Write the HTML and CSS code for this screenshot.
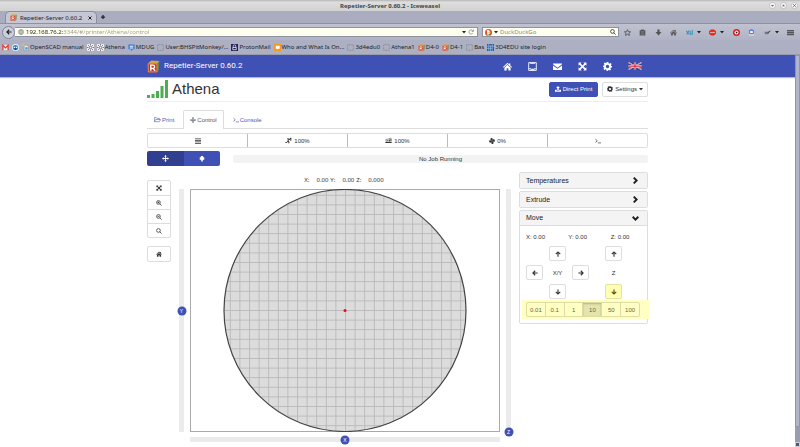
FILE: index.html
```html
<!DOCTYPE html>
<html lang="en">
<head>
<meta charset="utf-8">
<title>Repetier-Server 0.60.2</title>
<link rel="stylesheet" href="styles.css">
</head>
<body>
<svg class="sprite" aria-hidden="true">
  <defs>
    <symbol id="i-move" viewBox="0 0 16 16"><path d="M8 0l3 3.500H9V7h3.500V5L16 8l-3.500 3V9H9v3.500h2L8 16l-3-3.500h2V9H3.500v2L0 8l3.500-3v2H7V3.500H5z"/></symbol>
    <symbol id="i-home" viewBox="0 0 16 16"><path d="M8 1.500l2.500 2.300V2.500h2.500v3.600L16 9l-1 1-7-6.300L1 10 0 9z"/><path d="M8 5l5.500 5v5H9.500v-4h-3v4h-4v-5z"/></symbol>
    <symbol id="i-expand" viewBox="0 0 16 16"><path d="M1 1h5.500L4.700 2.800 8 6l3.300-3.200L9.500 1H15v5.500l-1.800-1.800L10 8l3.200 3.300L15 9.500V15H9.500l1.800-1.800L8 10l-3.300 3.200L6.500 15H1V9.500l1.800 1.800L6 8 2.800 4.700 1 6.500z"/></symbol>
    <symbol id="i-mail" viewBox="0 0 16 16"><path d="M0 2.500h16v1.700L8 10 0 4.200zM0 6l8 5.800L16 6v8H0z"/></symbol>
    <symbol id="i-gear" viewBox="0 0 16 16"><path fill-rule="evenodd" d="M6.500 0h3l.5 2.300 1.300.6 2-1.300 2 2.100-1.200 2 .5 1.300L16 7v2.500l-2.200.5-.6 1.300 1.200 2-2.100 2-2-1.200-1.300.5L8.500 16H6.500L6 13.700l-1.300-.6-2 1.200-2-2 1.200-2L1.400 9 0 8.700V6.500L2 6l.6-1.300-1.200-2 2-2 2.100 1.200L6.200 2zM8 5a3 3 0 100 6 3 3 0 000-6z"/></symbol>
    <symbol id="i-printer" viewBox="0 0 16 16"><path fill="none" stroke="currentColor" stroke-width="1.500" d="M1.200 1h13.600v14H1.200zM1.200 12h4v2h5.600v-2h4M4 1v1.500h8V1"/><path d="M6 12h4v2H6z"/></symbol>
    <symbol id="i-upload" viewBox="0 0 16 16"><path d="M8 0l5 5.500h-3V11H6V5.500H3zM0 10h4.500v2.500h7V10H16v5H0z"/></symbol>
    <symbol id="i-folder" viewBox="0 0 18 16"><path fill="none" stroke="currentColor" stroke-width="1.500" stroke-linejoin="round" d="M1 13V3h5l1.500 2H14v3M1 13.500L4.500 8H17l-3.500 5.500z"/></symbol>
    <symbol id="i-term" viewBox="0 0 16 16"><path fill="none" stroke="currentColor" stroke-width="1.800" d="M1 3l5 4.500L1 12M7.500 13H16"/></symbol>
    <symbol id="i-bars" viewBox="0 0 16 16"><path d="M0 1h16v2H0zM0 5h16v2H0zM0 9h16v2H0zM0 13h16v2H0z"/></symbol>
    <symbol id="i-run" viewBox="0 0 20 16"><circle cx="16" cy="2.500" r="2.500"/><path fill="none" stroke="currentColor" stroke-width="2.800" d="M6 3.500h6l2.500 3.500 4-.5M11.500 4L8 10l4 2-2 4M8 10l-2.500 3.500H1"/></symbol>
    <symbol id="i-flow" viewBox="0 0 20 16"><path d="M1 12h18v3H1zM2 8h3v3H2zM6.500 7h3v4h-3zM11 5h3v6h-3zM15.500 2h3v9h-3z"/><path fill="none" stroke="currentColor" stroke-width="1.500" d="M1 6l8-2 7-3"/></symbol>
    <symbol id="i-fan" viewBox="0 0 16 16"><g id="blade"><path d="M8 8C3 7 2 1 6.500.3 11 0 11 4 8 8z"/></g><use href="#blade" transform="rotate(90 8 8)"/><use href="#blade" transform="rotate(180 8 8)"/><use href="#blade" transform="rotate(270 8 8)"/></symbol>
    <symbol id="i-extr" viewBox="0 0 16 16"><path d="M5 0h6v3h3v7h-3l-1.500 3H9v3H7v-3h-.5L5 10H2V3h3z"/></symbol>
    <symbol id="i-zin" viewBox="0 0 16 16"><path fill="none" stroke="currentColor" stroke-width="2" d="M6.500 1.500a5 5 0 100 10 5 5 0 000-10zM10 10l5 5M6.500 4v5M4 6.500h5"/></symbol>
    <symbol id="i-zout" viewBox="0 0 16 16"><path fill="none" stroke="currentColor" stroke-width="2" d="M6.500 1.500a5 5 0 100 10 5 5 0 000-10zM10 10l5 5M4 6.500h5"/></symbol>
    <symbol id="i-zoom" viewBox="0 0 16 16"><path fill="none" stroke="currentColor" stroke-width="2" d="M6.500 1.500a5 5 0 100 10 5 5 0 000-10zM10 10l5 5"/></symbol>
    <symbol id="i-up" viewBox="0 0 16 16"><path fill="none" stroke="currentColor" stroke-width="3" d="M8 15V3M2 8.500l6-6 6 6"/></symbol>
    <symbol id="i-down" viewBox="0 0 16 16"><path fill="none" stroke="currentColor" stroke-width="3" d="M8 1v12M2 7.500l6 6 6-6"/></symbol>
    <symbol id="i-left" viewBox="0 0 16 16"><path fill="none" stroke="currentColor" stroke-width="3" d="M15 8H3M8.500 2l-6 6 6 6"/></symbol>
    <symbol id="i-right" viewBox="0 0 16 16"><path fill="none" stroke="currentColor" stroke-width="3" d="M1 8h12M7.500 2l6 6-6 6"/></symbol>
    <symbol id="i-chev" viewBox="0 0 16 16"><path fill="none" stroke="currentColor" stroke-width="4.500" d="M4 1.500L10.500 8 4 14.500"/></symbol>
    <symbol id="i-chevd" viewBox="0 0 16 16"><path fill="none" stroke="currentColor" stroke-width="4.500" d="M1.500 4L8 10.500 14.500 4"/></symbol>
    <symbol id="i-caret" viewBox="0 0 8 8"><path d="M0 2h8L4 7z"/></symbol>
    <symbol id="i-cross" viewBox="0 0 8 8"><path fill="none" stroke="currentColor" stroke-width="2" d="M1 1l6 6M7 1L1 7"/></symbol>
    <symbol id="i-plus" viewBox="0 0 8 8"><path fill="none" stroke="currentColor" stroke-width="2.500" d="M4 0v8M0 4h8"/></symbol>
    <symbol id="i-wmin" viewBox="0 0 16 16"><circle cx="8" cy="8" r="7" fill="#f4f4f4" stroke="#999"/><path d="M4.500 7h7L8 11z"/></symbol>
    <symbol id="i-wmax" viewBox="0 0 16 16"><circle cx="8" cy="8" r="7" fill="#f4f4f4" stroke="#999"/><path d="M4.500 9.500h7L8 5.500z"/></symbol>
    <symbol id="i-wclose" viewBox="0 0 16 16"><circle cx="8" cy="8" r="7" fill="#f4f4f4" stroke="#999"/><path fill="none" stroke="currentColor" stroke-width="2" d="M5 5l6 6M11 5l-6 6"/></symbol>
    <symbol id="i-globe" viewBox="0 0 16 16"><g fill="none" stroke="currentColor" stroke-width="1.500"><circle cx="8" cy="8" r="7"/><ellipse cx="8" cy="8" rx="3" ry="7"/><path d="M1 8h14M2.500 4.500h11M2.500 11.500h11"/></g></symbol>
    <symbol id="i-reload" viewBox="0 0 16 16"><path fill="none" stroke="#7288a8" stroke-width="2" d="M13 10.500A5.500 5.500 0 118 2.500h3"/><path fill="#7288a8" d="M9 7h6V0z"/></symbol>
    <symbol id="i-duck" viewBox="0 0 16 16"><circle cx="8" cy="8" r="8" fill="#dd5533"/><path fill="#fff" d="M4 3c4-2 7 0 7 4v8H6z"/><path fill="#f4b63a" d="M8 7h6l-3 2H8z"/><path fill="#3b9a45" d="M8 11h4v3H8z"/></symbol>
    <symbol id="i-star" viewBox="0 0 16 16"><path fill="none" stroke="currentColor" stroke-width="2" d="M8 1.500l2 4.500 5 .5-3.800 3.300 1.200 4.900L8 12l-4.400 2.700 1.200-4.900L1 6.500 6 6z"/></symbol>
    <symbol id="i-clip" viewBox="0 0 16 16"><path d="M5 1h6v2h3.500v12h-13V3H5z"/><path fill="none" stroke="#9a9ca8" d="M4 6h8M4 9h8M4 12h8"/></symbol>
    <symbol id="i-dl" viewBox="0 0 16 16"><path d="M5.500 1h5v6H15l-7 8-7-8h4.500z"/></symbol>
    <symbol id="i-ext" viewBox="0 0 20 16"><path fill="none" stroke="#2f95bd" stroke-width="3" d="M1 3l7 10M9 2L2 14M12 4v9h7M18 1v12"/></symbol>
    <symbol id="i-abp" viewBox="0 0 16 16"><path fill="#d92a1c" d="M5 1h6l5 4v6l-5 4H5l-5-4V5z"/><path fill="#e9a49c" d="M2 6.500h12v3H2z"/></symbol>
    <symbol id="i-target" viewBox="0 0 16 16"><circle cx="8" cy="8" r="8" fill="#e21b1b"/><circle cx="8" cy="8" r="4.500" fill="#fff"/><path fill="#222" d="M6 5l5 3-4 3z"/></symbol>
    <symbol id="i-ghost" viewBox="0 0 16 16"><circle cx="8" cy="6.500" r="6" fill="#5878d8"/><path fill="#eef" d="M4 6c2-3 6-3 8 0l-1 3H5z"/><path fill="#ddd" d="M2 12h12v3H2z"/></symbol>
    <symbol id="i-pen" viewBox="0 0 20 16"><path fill="#777" d="M1 6h12v7H3z"/><path fill="#444" d="M10 7l8-5 1 2-7 6z"/></symbol>
    <symbol id="i-menu" viewBox="0 0 16 16"><path d="M0 2h16v3H0zM0 6.500h16v3H0zM0 11h16v3H0z"/></symbol>
    <symbol id="i-gmail" viewBox="0 0 16 16"><path fill="#f3e9ec" d="M1 2h14v12H1z"/><path fill="none" stroke="#d8402f" stroke-width="3" d="M2 14V3l6 6 6-6v11"/></symbol>
    <symbol id="i-bird" viewBox="0 0 16 16"><circle cx="8" cy="8" r="8" fill="#eef4ff"/><circle cx="8" cy="8" r="6" fill="#2b84d6"/><path fill="#fff" d="M4 6h3v3H4zM9 6h3v3H9z"/><path fill="#223" d="M6 10h4v3H6z"/></symbol>
    <symbol id="i-scad" viewBox="0 0 16 16"><path fill="#e8c44c" d="M1 1h9v4H1z"/><path fill="#e9eef5" stroke="#6c7b90" d="M5 3h9v12H5z"/><circle cx="10" cy="10" r="3" fill="#52a0d0"/></symbol>
    <symbol id="i-sun" viewBox="0 0 16 16"><path fill="#f1f1f1" d="M0 0h16v16H0z"/><circle cx="8" cy="8" r="3" fill="none" stroke="#444" stroke-width="1.500"/><path stroke="#444" stroke-width="1.500" d="M8 0v3M8 13v3M0 8h3M13 8h3M2 2l2.500 2.500M11.500 11.500L14 14M14 2l-2.500 2.500M2 14l2.500-2.500"/></symbol>
    <symbol id="i-chat" viewBox="0 0 16 16"><path fill="#2d7be5" d="M1 1h14v11h-4l-3 4-2-4H1z"/><path fill="#fff" d="M4 4h8v2H4zM4 8h8v2H4z"/></symbol>
    <symbol id="i-blank" viewBox="0 0 16 16"><path fill="none" stroke="#74767f" stroke-width="1.500" stroke-dasharray="2 1.500" d="M1.500 1.500h13v13h-13z"/></symbol>
    <symbol id="i-proton" viewBox="0 0 16 16"><path fill="#25235a" d="M0 0h16v16H0z"/><path fill="none" stroke="#fff" stroke-width="1.600" d="M5 8V5a3 3 0 016 0v3M4 8h8v5H4z"/></symbol>
    <symbol id="i-who" viewBox="0 0 16 16"><path fill="#f0982a" d="M0 0h16v16H0z"/><path fill="#fff" d="M4 4h9v7H9l-2 2v-2H4z"/></symbol>
    <symbol id="i-grid" viewBox="0 0 16 16"><path fill="#2c5c9e" d="M0 0h16v16H0z"/><path stroke="#9cc0e8" stroke-width="1.500" d="M4 0v16M8 3v13M12 0v16M0 5h16M0 10h12"/></symbol>
    <symbol id="i-rep" viewBox="0 0 24 24"><path fill="#d9a441" d="M2 6l6-5 15 1-3 5z"/><path fill="#5f8a3c" d="M19 7l4-5-1 16-4 5z"/><path fill="#c9341f" d="M1 6h18v17H2z"/><path fill="none" stroke="#f3d9a0" d="M2 7h16.500v15H2.500z"/><path fill="none" stroke="#fff" stroke-width="2.600" d="M7 20V9.500h4a3 3 0 010 6H7M11 15.500l4 4.500"/></symbol>
    <symbol id="i-flag" viewBox="0 0 26 16"><path fill="#27418f" d="M0 1q6-1 13 0t13 0v14q-6 1-13 0T0 15z"/><path stroke="#fff" stroke-width="2.500" d="M0 1l26 14M26 1L0 15"/><path stroke="#d3384a" stroke-width="1.200" d="M0 1l26 14M26 1L0 15"/><path stroke="#fff" stroke-width="4.500" d="M13 1v14M0 8h26"/><path stroke="#d3283a" stroke-width="2.500" d="M13 1v14M0 8h26"/></symbol>
    <pattern id="cells" width="9.600" height="9.600" x="155" y="121" patternUnits="userSpaceOnUse"><path d="M0 .5H9.600M.5 0V9.600" fill="none" stroke="#8a8a8a" stroke-opacity=".4"/></pattern>
  </defs>
</svg>

<header class="chrome">
  <div class="titlebar">
    <strong>Repetier-Server 0.60.2 - Iceweasel</strong>
    <div class="window-buttons">
      <button aria-label="Minimize"><svg class="i7"><use href="#i-wmin"/></svg></button>
      <button aria-label="Maximize"><svg class="i7"><use href="#i-wmax"/></svg></button>
      <button aria-label="Close"><svg class="i7"><use href="#i-wclose"/></svg></button>
    </div>
  </div>
  <div class="tabstrip">
    <div class="browser-tab">
      <svg class="i7"><use href="#i-rep"/></svg><span>Repetier-Server 0.60.2</span>
      <button aria-label="Close tab"><svg class="i4"><use href="#i-cross"/></svg></button>
    </div>
    <button class="new-tab" aria-label="New tab"><svg class="i4"><use href="#i-plus"/></svg></button>
  </div>
  <div class="navbar">
    <button class="back" aria-label="Back"><svg class="i6"><use href="#i-left"/></svg></button>
    <div class="field address">
      <svg class="i6 muted"><use href="#i-globe"/></svg>
      <input aria-label="Address" value="192.168.76.2:3344/#/printer/Athena/control">
      <svg class="i4"><use href="#i-caret"/></svg>
      <button aria-label="Reload"><svg class="i6"><use href="#i-reload"/></svg></button>
    </div>
    <div class="field search">
      <svg class="i7"><use href="#i-duck"/></svg><svg class="i4"><use href="#i-caret"/></svg>
      <input aria-label="Search" placeholder="DuckDuckGo">
      <button aria-label="Go"><svg class="i6"><use href="#i-zoom"/></svg></button>
    </div>
    <div class="tools">
      <button aria-label="Bookmark"><svg class="i7"><use href="#i-star"/></svg></button>
      <button aria-label="Library"><svg class="i7"><use href="#i-clip"/></svg></button>
      <button aria-label="Downloads"><svg class="i7"><use href="#i-dl"/></svg></button>
      <button aria-label="Home"><svg class="i7"><use href="#i-home"/></svg></button>
      <button aria-label="Extension"><svg class="i7"><use href="#i-ext"/></svg><svg class="i4 dark"><use href="#i-caret"/></svg></button>
      <button aria-label="Ad blocker"><svg class="i7"><use href="#i-abp"/></svg><svg class="i4 dark"><use href="#i-caret"/></svg></button>
      <button aria-label="Privacy"><svg class="i7"><use href="#i-target"/></svg></button>
      <button aria-label="Trackers"><svg class="i7"><use href="#i-ghost"/></svg></button>
      <button aria-label="Edit"><svg class="i7"><use href="#i-pen"/></svg><svg class="i4 dark"><use href="#i-caret"/></svg></button>
      <button aria-label="Menu"><svg class="i7"><use href="#i-menu"/></svg></button>
    </div>
  </div>
  <nav class="bookmarks">
    <a href="#"><svg class="i7"><use href="#i-gmail"/></svg></a>
    <a href="#"><svg class="i7"><use href="#i-bird"/></svg></a>
    <a href="#"><svg class="i7"><use href="#i-scad"/></svg>OpenSCAD manual</a>
    <a href="#"><svg class="i7"><use href="#i-sun"/></svg></a>
    <a href="#"><svg class="i7"><use href="#i-sun"/></svg>Athena</a>
    <a href="#"><svg class="i7"><use href="#i-chat"/></svg>MDUG</a>
    <a href="#"><svg class="i7"><use href="#i-blank"/></svg>User:BHSPitMonkey/...</a>
    <a href="#"><svg class="i7"><use href="#i-proton"/></svg>ProtonMail</a>
    <a href="#"><svg class="i7"><use href="#i-who"/></svg>Who and What Is On...</a>
    <a href="#"><svg class="i7"><use href="#i-blank"/></svg>3d4edu0</a>
    <a href="#"><svg class="i7"><use href="#i-blank"/></svg>Athena1</a>
    <a href="#"><svg class="i7"><use href="#i-rep"/></svg>D4-0</a>
    <a href="#"><svg class="i7"><use href="#i-rep"/></svg>D4-1</a>
    <a href="#"><svg class="i7"><use href="#i-blank"/></svg>Bas</a>
    <a href="#"><svg class="i7"><use href="#i-grid"/></svg>3D4EDU site login</a>
  </nav>
</header>

<div class="viewport">
  <div class="page">
    <header class="appbar">
      <div class="container appbar-row">
        <a class="brand" href="#"><svg class="i13"><use href="#i-rep"/></svg>Repetier-Server 0.60.2</a>
        <nav class="app-links">
          <a href="#" aria-label="Home"><svg class="i9"><use href="#i-home"/></svg></a>
          <a href="#" aria-label="Printers"><svg class="i9"><use href="#i-printer"/></svg></a>
          <a href="#" aria-label="Messages"><svg class="i9"><use href="#i-mail"/></svg></a>
          <a href="#" aria-label="Fullscreen"><svg class="i9"><use href="#i-expand"/></svg></a>
          <a href="#" aria-label="Settings"><svg class="i9"><use href="#i-gear"/></svg></a>
          <a href="#" aria-label="Language"><svg class="flag"><use href="#i-flag"/></svg></a>
        </nav>
      </div>
    </header>

    <main class="container">
      <div class="heading">
        <svg class="signal" viewBox="0 0 21 18"><path d="M0 15h3v3H0zM4.500 14h3v4h-3zM9 11h3v7H9zM13.500 6h3v12h-3zM18 0h3v18h-3z"/></svg>
        <h1>Athena</h1>
        <button class="btn primary"><svg class="i6"><use href="#i-upload"/></svg>Direct Print</button>
        <button class="btn"><svg class="i6"><use href="#i-gear"/></svg>Settings<svg class="i4"><use href="#i-caret"/></svg></button>
      </div>

      <nav class="tabs">
        <a href="#"><svg class="i7"><use href="#i-folder"/></svg>Print</a>
        <a href="#" class="active"><svg class="i6"><use href="#i-move"/></svg>Control</a>
        <a href="#"><svg class="i6"><use href="#i-term"/></svg>Console</a>
      </nav>

      <div class="status">
        <button aria-label="Overview"><svg class="i6"><use href="#i-bars"/></svg></button>
        <button><svg class="i7"><use href="#i-run"/></svg>100%</button>
        <button><svg class="i7"><use href="#i-flow"/></svg>100%</button>
        <button><svg class="i6"><use href="#i-fan"/></svg>0%</button>
        <button aria-label="Commands"><svg class="i6"><use href="#i-term"/></svg></button>
      </div>

      <div class="job">
        <div class="mode">
          <button class="on" aria-label="Move"><svg class="i7"><use href="#i-move"/></svg></button>
          <button aria-label="Extruder"><svg class="i6"><use href="#i-extr"/></svg></button>
        </div>
        <div class="progress">No Job Running</div>
      </div>

      <div class="workspace">
        <div class="view-tools">
          <div class="stack">
            <button aria-label="Fit"><svg class="i6"><use href="#i-expand"/></svg></button>
            <button aria-label="Zoom in"><svg class="i6"><use href="#i-zin"/></svg></button>
            <button aria-label="Zoom out"><svg class="i6"><use href="#i-zout"/></svg></button>
            <button aria-label="Zoom"><svg class="i6"><use href="#i-zoom"/></svg></button>
          </div>
          <div class="stack">
            <button aria-label="Home all"><svg class="i6"><use href="#i-home"/></svg></button>
          </div>
        </div>

        <div class="bed-area">
          <div class="readout"><span>X:</span><span class="num">0.00</span><span>Y:</span><span class="num">0.00</span><span>Z:</span><span class="num">0.000</span></div>
          <div class="axis vertical"><input id="ax-y" type="range" value="50"><label class="mid" for="ax-y">Y</label></div>
          <svg class="bed" viewBox="0 0 310 243">
            <rect x=".5" y=".5" width="309" height="242" fill="#fff" stroke="#aaa"/>
            <circle cx="155" cy="121.500" r="121" fill="#dcdcdc"/>
            <circle cx="155" cy="121.500" r="121" fill="url(#cells)" stroke="#444" stroke-width="1.200"/>
            <circle cx="155" cy="121.500" r="1.500" fill="#e01010"/>
          </svg>
          <div class="axis vertical"><input id="ax-z" type="range" value="0"><label class="low" for="ax-z">Z</label></div>
          <div class="axis horizontal"><input id="ax-x" type="range" value="50"><label class="mid" for="ax-x">X</label></div>
        </div>

        <aside class="panels">
          <section class="panel"><button class="panel-head">Temperatures<svg class="i7"><use href="#i-chev"/></svg></button></section>
          <section class="panel"><button class="panel-head">Extrude<svg class="i7"><use href="#i-chev"/></svg></button></section>
          <section class="panel">
            <button class="panel-head open">Move<svg class="i7"><use href="#i-chevd"/></svg></button>
            <div class="panel-body">
              <div class="position"><span>X: 0.00</span><span>Y: 0.00</span><span>Z: 0.00</span></div>
              <div class="jog">
                <div class="pad">
                  <button class="key n" aria-label="Y plus"><svg class="i6"><use href="#i-up"/></svg></button>
                  <button class="key w" aria-label="X minus"><svg class="i6"><use href="#i-left"/></svg></button>
                  <span class="c">X/Y</span>
                  <button class="key e" aria-label="X plus"><svg class="i6"><use href="#i-right"/></svg></button>
                  <button class="key s" aria-label="Y minus"><svg class="i6"><use href="#i-down"/></svg></button>
                </div>
                <div class="lift">
                  <button class="key" aria-label="Z plus"><svg class="i6"><use href="#i-up"/></svg></button>
                  <span>Z</span>
                  <button class="key marked" aria-label="Z minus"><svg class="i6"><use href="#i-down"/></svg></button>
                </div>
              </div>
              <div class="steps-band">
                <div class="steps">
                  <button>0.01</button><button>0.1</button><button>1</button><button class="on">10</button><button>50</button><button>100</button>
                </div>
              </div>
            </div>
          </section>
        </aside>
      </div>
    </main>
  </div>
  <div class="scrollbar" aria-hidden="true"><div class="thumb"></div><div class="track"></div><div class="end"></div></div>
</div>
</body>
</html>
```
FILE: styles.css
```css
* { box-sizing: border-box; }
body {
  margin: 0;
  height: 100vh;
  display: flex;
  flex-direction: column;
  overflow: hidden;
  background: #fff;
  color: #333;
  font: 6px/8px "Liberation Sans", Arial, sans-serif;
}
button, input { font: inherit; color: inherit; border: 0; padding: 0; margin: 0; background: none; }
button { display: flex; align-items: center; justify-content: center; }
a { color: inherit; text-decoration: none; }
svg { display: block; flex: none; fill: currentColor; color: inherit; }
.sprite { position: absolute; width: 0; height: 0; }
.i4 { width: 4px; height: 4px; }
.i6 { width: 6px; height: 6px; }
.i7 { width: 7px; height: 7px; }
.i9 { width: 9px; height: 9px; }
.i13 { width: 13px; height: 13px; }
.muted { color: #888; }
.dark { color: #222; }

/* Browser frame */
.chrome { flex: none; font-family: "Noto Sans", sans-serif; color: #222; background: #adb0c2; }
.titlebar {
  height: 11px;
  display: grid;
  grid-template-columns: 1fr auto 1fr;
  align-items: center;
  padding: 0 2px;
  background: linear-gradient(#b4b4b4, #dedede 2px, #d2d2d2);
  color: #444;
}
.titlebar strong { grid-column: 2; margin-right: 20px; }
.window-buttons { display: flex; gap: 4px; justify-self: end; color: #666; }
.tabstrip { height: 13px; display: flex; align-items: flex-end; padding-left: 5px; background: #aaadbf; border-bottom: 1px solid #8e91a3; }
.browser-tab {
  height: 12px;
  width: 92px;
  display: flex;
  align-items: center;
  gap: 3px;
  padding: 0 4px;
  border: 1px solid #8b8e9e;
  border-bottom: 0;
  border-radius: 5px 5px 0 0;
  background: #c5c7d4;
}
.browser-tab button { margin-left: auto; }
.new-tab { width: 12px; height: 12px; }
.navbar { height: 16px; display: flex; align-items: center; gap: 4px; padding: 0 6px 0 2px; background: linear-gradient(#c0c2d0, #b0b3c4); }
.back { width: 13px; height: 13px; border: 1px solid #83869a; border-radius: 50%; background: #ccd0dc; }
.field { height: 10px; display: flex; align-items: center; gap: 2px; padding: 0 3px; background: #fffff0; border: 1px solid #8e919f; }
.field input { flex: 1; min-width: 0; height: 8px; outline: 0; }
.address { flex: 1; margin-left: -4px; border-left: 0; }
.address input {
  background: linear-gradient(90deg, #222 37px, #999 37px);
  background-clip: text;
  -webkit-background-clip: text;
  color: transparent;
}
.search { width: 137px; padding: 0 2px; }
.search input::placeholder { color: #888; opacity: 1; }
.tools { width: 171px; display: flex; align-items: center; justify-content: space-between; padding-left: 1px; color: #555; }
.tools button { gap: 4px; }
.bookmarks { height: 15px; display: flex; align-items: center; gap: 3px; padding-left: 2px; border-bottom: 1px solid #999cab; white-space: nowrap; }
.bookmarks a { display: flex; align-items: center; gap: 1px; }

/* Viewport */
.viewport { flex: 1; min-height: 0; display: flex; }
.page { flex: 1; min-width: 0; overflow: hidden; }
.scrollbar { width: 5px; display: flex; flex-direction: column; background: #9a9db0; }
.scrollbar .thumb { flex: 1; background: #b2b5ca; border: 1px solid #9295a8; }
.scrollbar .track { height: 15px; background: #9a9db0; }
.scrollbar .end { height: 5px; background: #555869; border: 1px solid #c9ccd8; }
.container { max-width: 501px; margin: 0 auto; }

/* Application bar */
.appbar { background: #3f51b5; color: #fff; box-shadow: 0 1px 1px #bbb; }
.appbar-row { height: 22px; display: flex; align-items: center; justify-content: space-between; }
.brand { display: flex; align-items: center; gap: 4px; font: 8px/10px Roboto, sans-serif; }
.app-links { display: flex; align-items: center; gap: 16px; padding-right: 6px; }
.flag { width: 14px; height: 8px; }

/* Heading */
.heading { height: 25px; display: flex; align-items: center; gap: 4px; border-bottom: 1px solid #eee; }
.signal { width: 21px; height: 18px; fill: #4cae50; }
h1 { flex: 1; margin: 0; font: 15px/18px "Liberation Sans", Arial, sans-serif; }
.btn { height: 15px; gap: 2px; padding: 0 4px; border: 1px solid #ddd; border-radius: 2px; background: #fff; }
.btn.primary { padding: 0 5px; background: #3f51b5; border-color: #3f51b5; color: #fff; }

/* Tabs */
.tabs { display: flex; gap: 2px; margin-top: 8px; border-bottom: 1px solid #ddd; color: #4a5bb9; }
.tabs a { display: flex; align-items: center; gap: 1px; height: 18px; padding: 0 6px; border: 1px solid transparent; border-bottom: 0; border-radius: 2px 2px 0 0; }
.tabs .active { color: #555; background: #fff; border-color: #ddd; margin-bottom: -1px; height: 19px; }

.status { display: flex; height: 15px; margin-top: 4px; border: 1px solid #ddd; border-radius: 2px; }
.status button { flex: 1; gap: 2px; }
.status button + button { border-left: 1px solid #bbb; }

.job { display: flex; align-items: center; gap: 13px; margin-top: 3px; }
.mode { width: 73px; height: 15px; display: flex; border-radius: 2px; overflow: hidden; color: #fff; }
.mode button { flex: 1; background: #3f51b5; }
.mode .on { background: #303f8f; }
.progress { flex: 1; height: 8px; text-align: center; background: #f3f3f3; border-radius: 2px; }

/* Workspace */
.workspace { display: flex; align-items: flex-start; gap: 6px; margin-top: 6px; }
.view-tools { width: 24px; display: flex; flex-direction: column; gap: 8px; margin-top: 8px; }
.stack { border: 1px solid #ddd; border-radius: 2px; }
.stack button { width: 100%; height: 14px; }
.stack button + button { border-top: 1px solid #ddd; }
.bed-area { flex: 1; min-width: 0; display: grid; grid-template-columns: 9px 1fr 9px; column-gap: 4px; }
.readout {
  grid-column: 2;
  display: flex;
  justify-content: center;
  height: 17px;
  padding-top: 4px;
  font-family: "Noto Sans", sans-serif;
}
.num { margin: 0 2px 0 7px; }
.vertical { grid-row: 2; }
.bed { grid-row: 2; width: 100%; height: auto; }
.axis { position: relative; background: #ebebeb content-box; }
.axis.vertical { padding: 0 2px; }
.axis.horizontal { grid-column: 2; height: 9px; margin-top: 3px; padding: 2px 0; }
.axis input { position: absolute; inset: 0; width: 100%; height: 100%; opacity: 0; }
.axis.vertical input { writing-mode: vertical-lr; direction: rtl; }
.axis label {
  position: absolute;
  left: 50%;
  top: 50%;
  width: 9px;
  height: 9px;
  transform: translate(-50%, -50%);
  border-radius: 50%;
  background: #3f51b5;
  color: #fff;
  text-align: center;
  font-size: 5px;
  line-height: 9px;
}
.axis .low { top: 100%; }

/* Panels */
.panels { width: 129px; display: flex; flex-direction: column; gap: 2px; }
.panel { border: 1px solid #ddd; border-radius: 2px; }
.panel-head { width: 100%; height: 15px; justify-content: space-between; padding: 0 8px 0 6px; background: #f4f4f4; font-size: 7px; color: #222; }
.panel-head.open { border-bottom: 1px solid #ddd; }
.panel-body { padding-top: 7px; }
.position { display: grid; grid-template-columns: 1fr 1fr 1fr; }
.position span { padding-left: 6px; }
.jog { display: flex; justify-content: space-between; padding: 5px 25px 0 6px; }
.pad { display: grid; grid-template-columns: 17px 17px 17px; gap: 4px 6px; align-items: center; text-align: center; }
.lift { display: flex; flex-direction: column; align-items: center; justify-content: space-between; }
.key { width: 17px; height: 15px; border: 1px solid #ddd; border-radius: 2px; background: #fff; }
.n, .s, .c { grid-column: 2; }
.n { grid-row: 1; }
.w, .c, .e { grid-row: 2; }
.w { grid-column: 1; }
.e { grid-column: 3; }
.s { grid-row: 3; }
.marked { background: #ffffaf; border-color: #e2e2a4; color: #4c4c20; }
.steps-band { margin: 1px -2px 4px 2px; padding: 2px 9px 2px 4px; background: #ffffc4; }
.steps { display: flex; border: 1px solid #dcdca4; border-radius: 2px; color: #65653e; }
.steps button { flex: 1 1 0; height: 13px; }
.steps button + button { border-left: 1px solid #dcdca4; }
.steps .on { background: #e4e4ae; box-shadow: inset 0 1px 2px #b4b480; }
```
